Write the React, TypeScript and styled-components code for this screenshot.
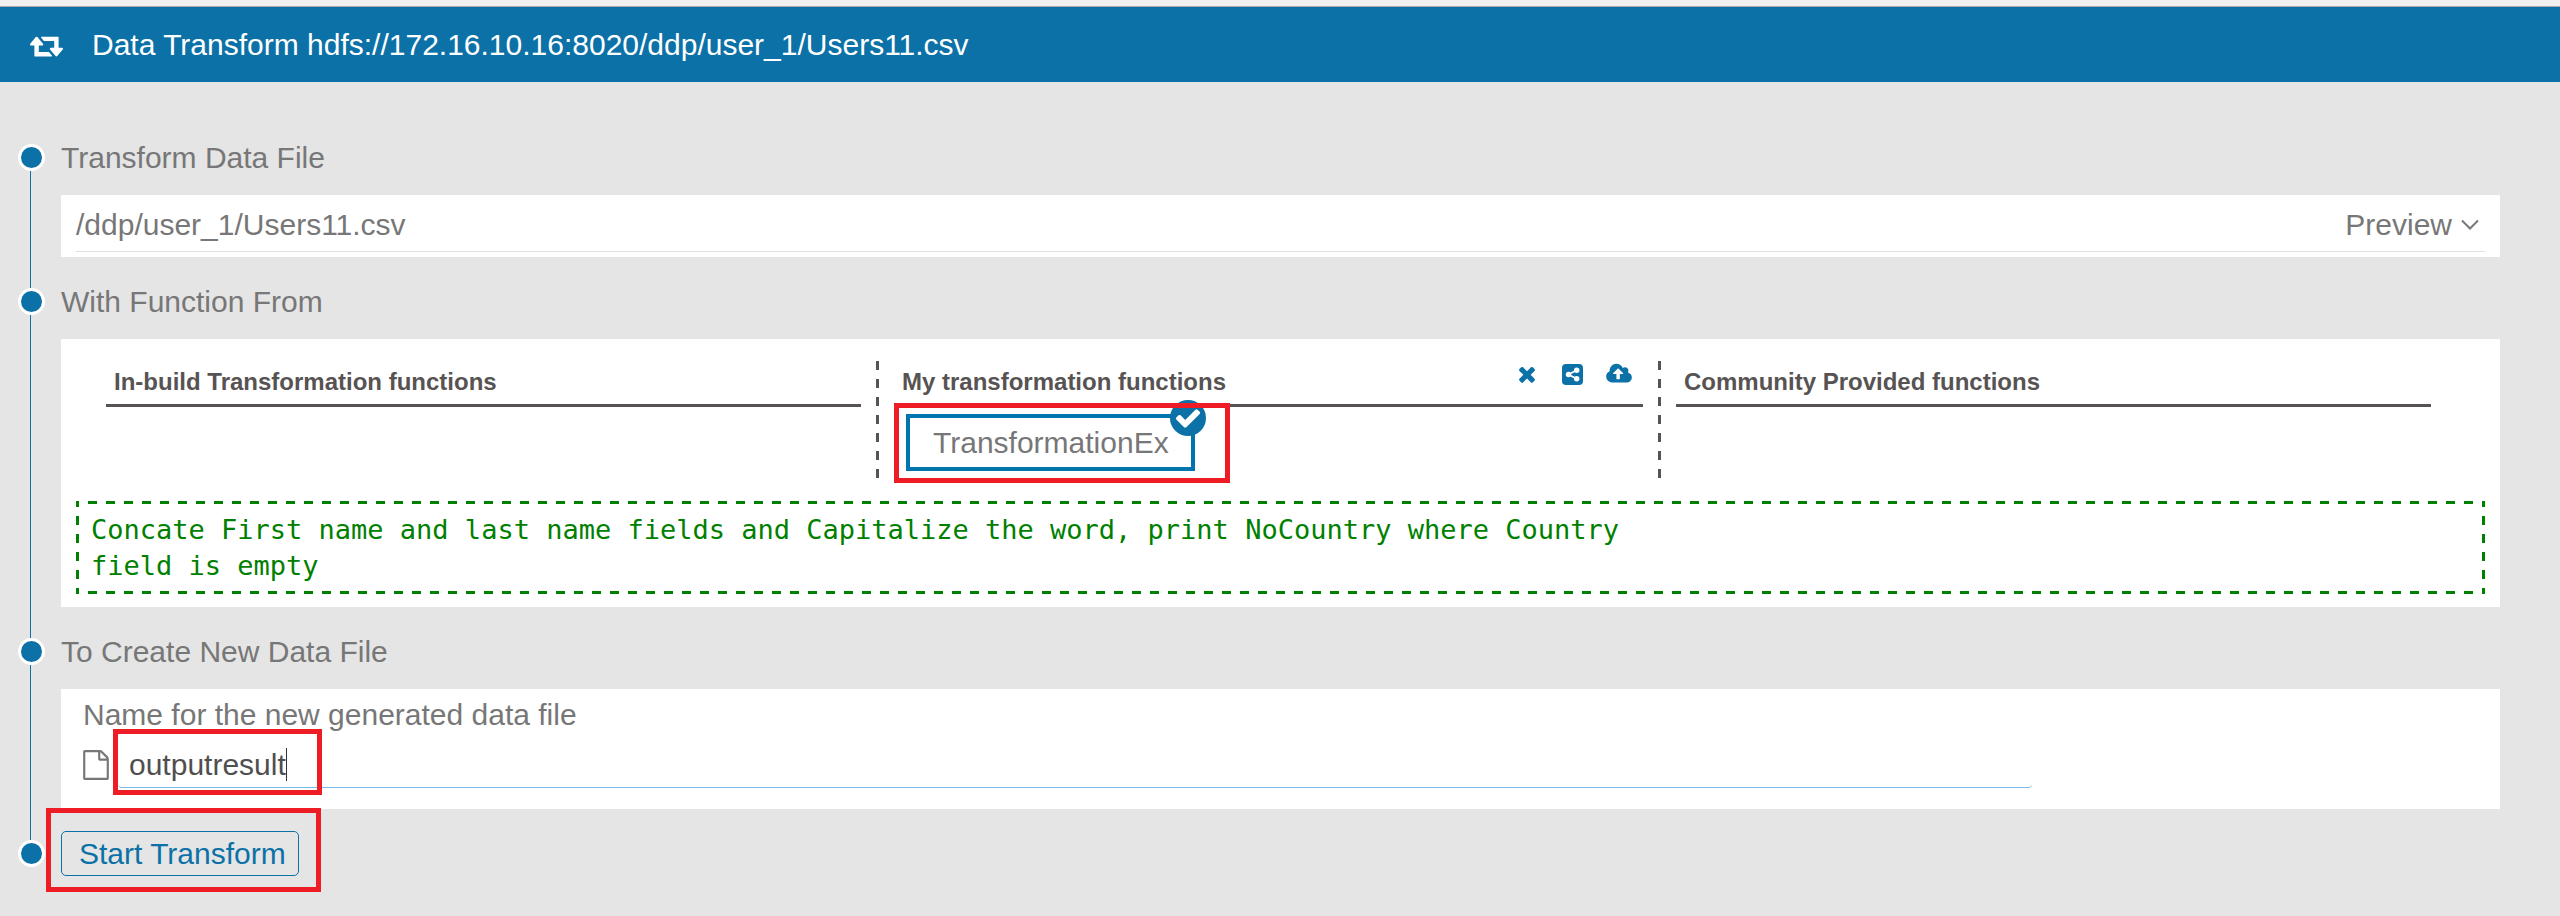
import React, { useState } from "react";
import styled, { createGlobalStyle } from "styled-components";

const blue = "#0c71a7";
const green = "#008000";
const grey = "#777777";
const dark = "#575353";

const dashes = (direction: string, color: string) =>
  `linear-gradient(${direction}, ${color} 9px, transparent 9px)`;

const GlobalStyle = createGlobalStyle`
  * { box-sizing: border-box; }
  body {
    margin: 0;
    background: #e5e5e5;
    color: ${grey};
    font: 30px/36px "Liberation Sans", Arial, sans-serif;
  }
  button, input { font: inherit; }
  svg { display: block; flex: none; }
`;

const TopBar = styled.header`
  display: flex;
  align-items: center;
  gap: 29px;
  height: 82px;
  padding: 2px 30px 0;
  border-top: 6px solid #f0f0f0;
  background: ${blue};
  box-shadow: inset 0 1px 0 #a9a9a9;
  color: #ffffff;
`;

const Title = styled.h1`
  margin: 0;
  font-size: 30px;
  font-weight: 400;
`;

const Steps = styled.main`
  display: flex;
  flex-direction: column;
  padding: 38px 60px 24px 18px;
`;

const StepRow = styled.section`
  display: flex;
  gap: 16px;
`;

const Rail = styled.div`
  display: flex;
  flex: none;
  flex-direction: column;
  width: 27px;
`;

const Segment = styled.span<{ $hidden?: boolean; $grow?: boolean }>`
  flex: ${(p) => (p.$grow ? "1 0 24px" : "0 0 24px")};
  width: 1px;
  margin-left: 12px;
  background: ${(p) => (p.$hidden ? "transparent" : blue)};
`;

const Dot = styled.span`
  flex: none;
  height: 27px;
  border: 3px solid #ffffff;
  border-radius: 50%;
  background: ${blue};
`;

const StepContent = styled.div`
  flex: 1;
  min-width: 0;
  padding-bottom: 7px;
`;

const StepTitle = styled.h2`
  margin: 0;
  font-size: 30px;
  font-weight: 400;
  line-height: 75px;
`;

const Panel = styled.div<{ $padding: string }>`
  padding: ${(p) => p.$padding};
  background: #ffffff;
`;

const FileRow = styled.div`
  display: flex;
  align-items: center;
  justify-content: space-between;
  height: 57px;
  padding-top: 3px;
  border-bottom: 1px solid #e0e0e0;
`;

const PreviewButton = styled.button`
  display: flex;
  align-items: center;
  gap: 9px;
  padding: 0 6px 0 0;
  border: 0;
  background: none;
  color: inherit;
`;

const Columns = styled.div`
  display: grid;
  grid-template-columns: repeat(3, 1fr);
  min-height: 120px;
  margin: 0 39px 22px 15px;
`;

const Column = styled.section<{ $divided?: boolean }>`
  padding: ${(p) => (p.$divided ? "0 18px" : "0 15px")};
  ${(p) =>
    p.$divided &&
    `
    background:
      ${dashes("180deg", dark)} left 2px / 3px 18px repeat-y,
      ${dashes("180deg", dark)} right 2px / 3px 18px repeat-y;
    background-position: left 0 top 2px, right 0 top 2px;
  `}
`;

const ColumnHead = styled.div`
  display: flex;
  justify-content: space-between;
  padding: 0 11px 0 8px;
  border-bottom: 3px solid ${dark};
`;

const ColumnTitle = styled.h3`
  margin: 0;
  color: ${dark};
  font-size: 24px;
  line-height: 45px;
`;

const Tools = styled.div`
  display: flex;
  align-items: center;
  gap: 23px;
  height: 30px;
`;

const ToolButton = styled.button`
  padding: 0;
  border: 0;
  background: none;
  color: ${blue};
`;

const Highlighted = styled.div<{ $margin?: string }>`
  position: relative;
  width: fit-content;
  margin: ${(p) => p.$margin ?? "0"};
`;

const Marker = styled.span<{ $inset: string }>`
  position: absolute;
  inset: ${(p) => p.$inset};
  border: 5px solid #ee1c25;
  pointer-events: none;
`;

const FunctionItem = styled.button`
  display: block;
  height: 57px;
  padding: 0 22px 0 23px;
  border: 4px solid #0074ac;
  background: #ffffff;
  color: ${grey};
`;

const Badge = styled.span`
  position: absolute;
  top: -14px;
  right: -11px;
  display: grid;
  place-items: center;
  width: 36px;
  height: 36px;
  border-radius: 50%;
  background: ${blue};
  color: #ffffff;
`;

const Description = styled.pre`
  margin: 0;
  padding: 11px 15px 10px;
  background-image:
    ${dashes("90deg", green)},
    ${dashes("90deg", green)},
    ${dashes("180deg", green)},
    ${dashes("180deg", green)};
  background-position:
    left 12px top 0,
    left 12px bottom 0,
    left 0 top 15px,
    right 0 top 15px;
  background-size: 18px 3px, 18px 3px, 3px 18px, 3px 18px;
  background-repeat: repeat-x, repeat-x, repeat-y, repeat-y;
  color: ${green};
  font: 27px/36px "DejaVu Sans Mono", monospace;
`;

const FieldLabel = styled.label`
  display: block;
`;

const FieldRow = styled.div`
  display: flex;
  align-items: center;
  gap: 9px;
  width: 81%;
  margin-top: 9px;
`;

const Field = styled.div`
  position: relative;
  display: flex;
  flex: 1;
  align-items: center;
  height: 46px;
  padding: 0 11px;
  border-bottom: 1px solid #7ab8ea;
  border-radius: 4px;
`;

const NameInput = styled.input`
  field-sizing: content;
  padding: 0;
  border: 0;
  outline: 0;
  background: none;
  color: #4f4f4f;
  caret-color: transparent;
`;

const Caret = styled.span`
  width: 1px;
  height: 33px;
  background: #333333;
`;

const InputMarker = styled(Marker)`
  right: auto;
  width: 209px;
`;

const StartRow = styled.div`
  display: flex;
  align-items: center;
  height: 75px;
`;

const StartButton = styled.button`
  display: block;
  height: 45px;
  padding: 0 12px 0 17px;
  border: 1px solid ${blue};
  border-radius: 5px;
  background: none;
  color: ${blue};
`;

const RetweetIcon = () => (
  <svg width="33" height="31" viewBox="0 0 1920 1792" fill="currentColor" aria-hidden="true">
    <path d="M1280 1504q0 13-9.500 22.500t-22.500 9.500h-960q-8 0-13.500-2t-9-7-5.500-8-3-11.500-1-11.500v-600h-192q-26 0-45-19t-19-45q0-24 15-41l320-384q19-22 49-22t49 22l320 384q15 17 15 41 0 26-19 45t-45 19h-192v384h576q16 0 25 11l160 192q7 10 7 21zm640-416q0 24-15 41l-320 384q-20 23-49 23t-49-23l-320-384q-15-17-15-41 0-26 19-45t45-19h192v-384h-576q-16 0-25-12l-160-192q-7-9-7-20 0-13 9.500-22.500t22.500-9.500h960q8 0 13.500 2t9 7 5.500 8 3 11.500 1 11.500v600h192q26 0 45 19t19 45z" />
  </svg>
);

const ChevronIcon = () => (
  <svg width="18" height="12" viewBox="0 0 18 12" fill="none" stroke="currentColor" strokeWidth="2" aria-hidden="true">
    <path d="M1 1.500 9 9.500 17 1.500" />
  </svg>
);

const RemoveIcon = () => (
  <svg width="24" height="24" viewBox="0 0 1792 1792" fill="currentColor" aria-hidden="true">
    <path d="M1490 1322q0 40-28 68l-136 136q-28 28-68 28t-68-28l-294-294-294 294q-28 28-68 28t-68-28l-136-136q-28-28-28-68t28-68l294-294-294-294q-28-28-28-68t28-68l136-136q28-28 68-28t68 28l294 294 294-294q28-28 68-28t68 28l136 136q28 28 28 68t-28 68l-294 294 294 294q28 28 28 68z" />
  </svg>
);

const ShareIcon = () => (
  <svg width="21" height="21" viewBox="0 0 21 21" aria-hidden="true">
    <rect width="21" height="21" rx="4" fill="currentColor" />
    <path d="M15 6 6.500 10.500 15 15" fill="none" stroke="#ffffff" strokeWidth="1.800" />
    <circle cx="6.500" cy="10.500" r="2.700" fill="#ffffff" />
    <circle cx="14.700" cy="6.200" r="2.700" fill="#ffffff" />
    <circle cx="14.700" cy="14.800" r="2.700" fill="#ffffff" />
  </svg>
);

const UploadIcon = () => (
  <svg width="26" height="24" viewBox="0 0 1920 1792" fill="currentColor" aria-hidden="true">
    <path d="M1280 864q0-14-9-23l-352-352q-9-9-23-9t-23 9l-351 351q-10 12-10 24 0 14 9 23t23 9h224v352q0 13 9.500 22.500t22.500 9.500h192q13 0 22.500-9.500t9.500-22.500v-352h224q13 0 22.500-9.500t9.500-22.500zm640 288q0 159-112.500 271.500t-271.500 112.500h-1088q-185 0-316.500-131.500t-131.500-316.500q0-130 70-240t188-165q-2-30-2-43 0-212 150-362t362-150q156 0 285.500 87t188.500 231q71-62 166-62 106 0 181 75t75 181q0 76-41 138 130 31 213.500 135.500t83.500 238.500z" />
  </svg>
);

const CheckIcon = () => (
  <svg width="28" height="28" viewBox="0 0 1792 1792" fill="currentColor" aria-hidden="true">
    <path d="M1671 566q0 40-28 68l-724 724-136 136q-28 28-68 28t-68-28l-136-136-362-362q-28-28-28-68t28-68l136-136q28-28 68-28t68 28l294 295 656-657q28-28 68-28t68 28l136 136q28 28 28 68z" />
  </svg>
);

const FileIcon = () => (
  <svg width="26" height="30" viewBox="128 0 1536 1792" fill="currentColor" aria-hidden="true">
    <path d="M1596 380q28 28 48 76t20 88v1152q0 40-28 68t-68 28h-1344q-40 0-68-28t-28-68v-1600q0-40 28-68t68-28h896q40 0 88 20t76 48zm-444-244v376h376q-10-29-22-41l-313-313q-12-12-41-22zm384 1528v-1024h-416q-40 0-68-28t-28-68v-416h-768v1536h1280z" />
  </svg>
);

type StepProps = {
  title?: string;
  first?: boolean;
  last?: boolean;
  children: React.ReactNode;
};

const Step = ({ title, first, last, children }: StepProps) => (
  <StepRow>
    <Rail>
      <Segment $hidden={first} />
      <Dot />
      <Segment $grow $hidden={last} />
    </Rail>
    <StepContent>
      {title && <StepTitle>{title}</StepTitle>}
      {children}
    </StepContent>
  </StepRow>
);

const description = `Concate First name and last name fields and Capitalize the word, print NoCountry where Country
field is empty`;

export default function App() {
  const [name, setName] = useState("outputresult");

  return (
    <>
      <GlobalStyle />
      <TopBar>
        <RetweetIcon />
        <Title>Data Transform hdfs://172.16.10.16:8020/ddp/user_1/Users11.csv</Title>
      </TopBar>
      <Steps>
        <Step title="Transform Data File" first>
          <Panel $padding="0 15px 5px">
            <FileRow>
              <span>/ddp/user_1/Users11.csv</span>
              <PreviewButton type="button">
                Preview
                <ChevronIcon />
              </PreviewButton>
            </FileRow>
          </Panel>
        </Step>

        <Step title="With Function From">
          <Panel $padding="20px 15px 13px">
            <Columns>
              <Column>
                <ColumnHead>
                  <ColumnTitle>In-build Transformation functions</ColumnTitle>
                </ColumnHead>
              </Column>
              <Column $divided>
                <ColumnHead>
                  <ColumnTitle>My transformation functions</ColumnTitle>
                  <Tools>
                    <ToolButton type="button" aria-label="Remove">
                      <RemoveIcon />
                    </ToolButton>
                    <ToolButton type="button" aria-label="Share">
                      <ShareIcon />
                    </ToolButton>
                    <ToolButton type="button" aria-label="Upload">
                      <UploadIcon />
                    </ToolButton>
                  </Tools>
                </ColumnHead>
                <Highlighted $margin="7px 12px 0">
                  <FunctionItem type="button" aria-pressed="true">
                    TransformationEx
                  </FunctionItem>
                  <Badge>
                    <CheckIcon />
                  </Badge>
                  <Marker $inset="-11px -35px -12px -12px" />
                </Highlighted>
              </Column>
              <Column>
                <ColumnHead>
                  <ColumnTitle>Community Provided functions</ColumnTitle>
                </ColumnHead>
              </Column>
            </Columns>
            <Description>{description}</Description>
          </Panel>
        </Step>

        <Step title="To Create New Data File">
          <Panel $padding="8px 11px 21px 22px">
            <FieldLabel htmlFor="file-name">Name for the new generated data file</FieldLabel>
            <FieldRow>
              <FileIcon />
              <Field>
                <NameInput
                  id="file-name"
                  type="text"
                  value={name}
                  onChange={(event) => setName(event.target.value)}
                />
                <Caret />
                <InputMarker $inset="-13px auto -8px -5px" />
              </Field>
            </FieldRow>
          </Panel>
        </Step>

        <Step last>
          <StartRow>
            <Highlighted>
              <StartButton type="button">Start Transform</StartButton>
              <Marker $inset="-23px -22px -16px -15px" />
            </Highlighted>
          </StartRow>
        </Step>
      </Steps>
    </>
  );
}
